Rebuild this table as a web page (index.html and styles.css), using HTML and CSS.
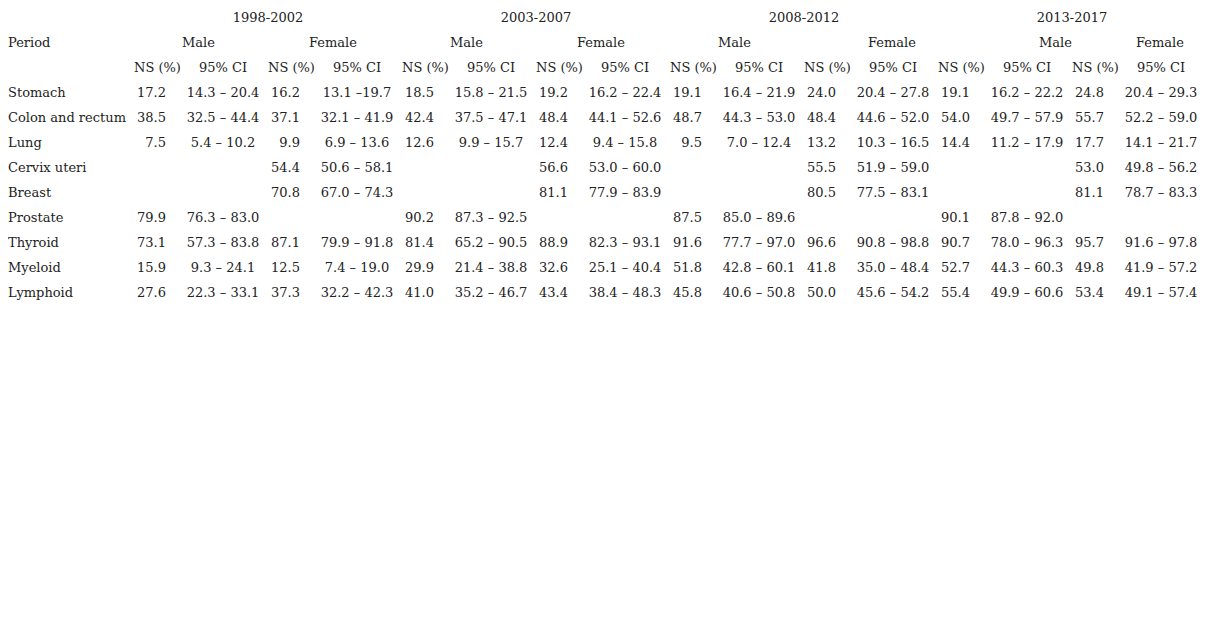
FILE: index.html
```html
<!DOCTYPE html>
<html lang="en">
<head>
    <meta charset="UTF-8">
    <title>Net survival by period</title>
    <link rel="stylesheet" href="styles.css">
</head>
<body>
    <table class="survival">
        <colgroup>
            <col class="c-label">
            <col class="c-ns"><col class="c-ci"><col class="c-ns"><col class="c-ci">
            <col class="c-ns"><col class="c-ci"><col class="c-ns"><col class="c-ci">
            <col class="c-ns"><col class="c-ci"><col class="c-ns"><col class="c-ci">
            <col class="c-ns"><col class="c-ci"><col class="c-ns"><col class="c-ci">
        </colgroup>
        <thead>
            <tr>
                <th></th>
                <th colspan="4" class="period">1998-2002</th>
                <th colspan="4" class="period">2003-2007</th>
                <th colspan="4" class="period">2008-2012</th>
                <th colspan="4" class="period">2013-2017</th>
            </tr>
            <tr>
                <th class="label">Period</th>
                <th colspan="2" class="sex male">Male</th>
                <th colspan="2" class="sex female">Female</th>
                <th colspan="2" class="sex male">Male</th>
                <th colspan="2" class="sex female">Female</th>
                <th colspan="2" class="sex male">Male</th>
                <th colspan="2" class="sex female wide">Female</th>
                <th colspan="2" class="sex male wide">Male</th>
                <th colspan="2" class="sex female wide">Female</th>
            </tr>
            <tr>
                <th></th>
                <th class="ns-head">NS (%)</th><th class="ci-head">95% CI</th>
                <th class="ns-head">NS (%)</th><th class="ci-head">95% CI</th>
                <th class="ns-head">NS (%)</th><th class="ci-head">95% CI</th>
                <th class="ns-head">NS (%)</th><th class="ci-head">95% CI</th>
                <th class="ns-head">NS (%)</th><th class="ci-head">95% CI</th>
                <th class="ns-head">NS (%)</th><th class="ci-head">95% CI</th>
                <th class="ns-head">NS (%)</th><th class="ci-head">95% CI</th>
                <th class="ns-head">NS (%)</th><th class="ci-head">95% CI</th>
            </tr>
        </thead>
        <tbody id="rows"></tbody>
    </table>

    <script>
        // site, then [NS, CI] pairs: 98-02 M, F, 03-07 M, F, 08-12 M, F, 13-17 M, F
        const data = [
            ['Stomach', '17.2', '14.3 – 20.4', '16.2', '13.1 –19.7', '18.5', '15.8 – 21.5', '19.2', '16.2 – 22.4', '19.1', '16.4 – 21.9', '24.0', '20.4 – 27.8', '19.1', '16.2 – 22.2', '24.8', '20.4 – 29.3'],
            ['Colon and rectum', '38.5', '32.5 – 44.4', '37.1', '32.1 – 41.9', '42.4', '37.5 – 47.1', '48.4', '44.1 – 52.6', '48.7', '44.3 – 53.0', '48.4', '44.6 – 52.0', '54.0', '49.7 – 57.9', '55.7', '52.2 – 59.0'],
            ['Lung', '7.5', '5.4 – 10.2', '9.9', '6.9 – 13.6', '12.6', '9.9 – 15.7', '12.4', '9.4 – 15.8', '9.5', '7.0 – 12.4', '13.2', '10.3 – 16.5', '14.4', '11.2 – 17.9', '17.7', '14.1 – 21.7'],
            ['Cervix uteri', '', '', '54.4', '50.6 – 58.1', '', '', '56.6', '53.0 – 60.0', '', '', '55.5', '51.9 – 59.0', '', '', '53.0', '49.8 – 56.2'],
            ['Breast', '', '', '70.8', '67.0 – 74.3', '', '', '81.1', '77.9 – 83.9', '', '', '80.5', '77.5 – 83.1', '', '', '81.1', '78.7 – 83.3'],
            ['Prostate', '79.9', '76.3 – 83.0', '', '', '90.2', '87.3 – 92.5', '', '', '87.5', '85.0 – 89.6', '', '', '90.1', '87.8 – 92.0', '', ''],
            ['Thyroid', '73.1', '57.3 – 83.8', '87.1', '79.9 – 91.8', '81.4', '65.2 – 90.5', '88.9', '82.3 – 93.1', '91.6', '77.7 – 97.0', '96.6', '90.8 – 98.8', '90.7', '78.0 – 96.3', '95.7', '91.6 – 97.8'],
            ['Myeloid', '15.9', '9.3 – 24.1', '12.5', '7.4 – 19.0', '29.9', '21.4 – 38.8', '32.6', '25.1 – 40.4', '51.8', '42.8 – 60.1', '41.8', '35.0 – 48.4', '52.7', '44.3 – 60.3', '49.8', '41.9 – 57.2'],
            ['Lymphoid', '27.6', '22.3 – 33.1', '37.3', '32.2 – 42.3', '41.0', '35.2 – 46.7', '43.4', '38.4 – 48.3', '45.8', '40.6 – 50.8', '50.0', '45.6 – 54.2', '55.4', '49.9 – 60.6', '53.4', '49.1 – 57.4']
        ];

        const tbody = document.getElementById('rows');
        data.forEach(row => {
            const tr = document.createElement('tr');
            row.forEach((value, i) => {
                const td = document.createElement('td');
                td.textContent = value;
                if (i === 0) td.className = 'label';
                else td.className = i % 2 === 1 ? 'ns' : 'ci';
                tr.appendChild(td);
            });
            tbody.appendChild(tr);
        });
    </script>
</body>
</html>
```

FILE: styles.css
```css
body {
    margin: 0;
    padding: 5px 0 0 8px;
    background-color: #fff;
    color: #222;
    font-family: 'DejaVu Serif', 'Liberation Serif', serif;
    font-size: 13px;
}
.survival {
    table-layout: fixed;
    border-collapse: collapse;
    width: 1198px;
}
.c-label {
    width: 126px;
}
.c-ns {
    width: 44px;
}
.c-ci {
    width: 90px;
}
.survival th,
.survival td {
    height: 25px;
    padding: 0;
    font-weight: normal;
    white-space: nowrap;
    vertical-align: middle;
}
.survival .label {
    text-align: left;
}
.period {
    text-align: center;
}
.sex {
    text-align: left;
}
.sex.male {
    padding-left: 48px;
}
.sex.female {
    padding-left: 41px;
}
.sex.female.wide {
    padding-left: 64px;
}
.sex.male.wide {
    padding-left: 101px;
}
.ns-head,
.ci-head,
.ci {
    text-align: center;
}
.survival .ns {
    text-align: right;
    padding-right: 12px;
}
```
